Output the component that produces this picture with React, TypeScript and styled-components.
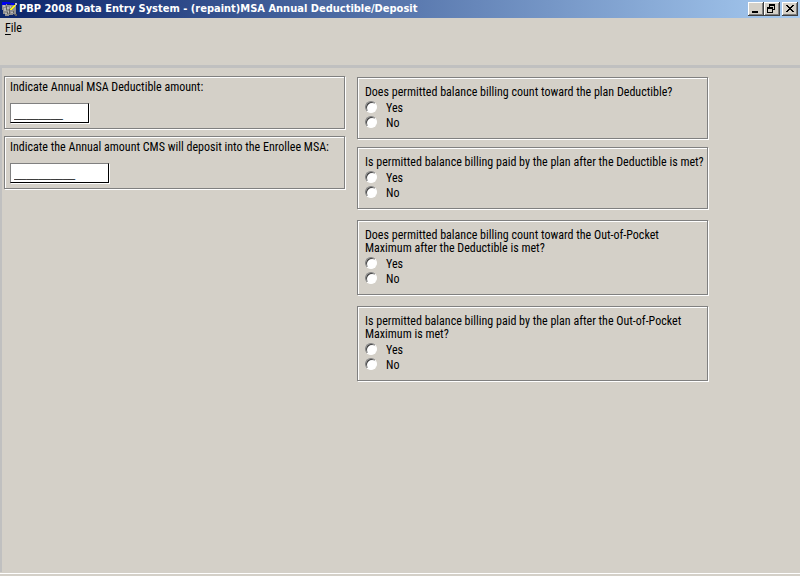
import React, { useId } from "react";
import styled, { createGlobalStyle } from "styled-components";

const face = "#d4d0c8";
const shade = "#808080";

const GlobalStyle = createGlobalStyle`
  *, *::before, *::after { box-sizing: border-box; }
  body {
    margin: 0;
    background: ${face};
    color: #000;
    font: 12px/13px "Roboto Condensed", "Liberation Sans", Arial, sans-serif;
  }
  button, input { font: inherit; color: inherit; }
`;

const Window = styled.div`
  display: flex;
  flex-direction: column;
  min-height: 100vh;
  background: ${face};
`;

const TitleBar = styled.header`
  display: flex;
  align-items: center;
  gap: 2px;
  height: 18px;
  padding: 0 2px;
  background: linear-gradient(to right, #0a246a, #a6caf0);
`;

const Title = styled.h1`
  flex: 1;
  min-width: 0;
  margin: 0;
  overflow: hidden;
  color: #fff;
  font: bold 11px/18px "DejaVu Sans Condensed", "DejaVu Sans", sans-serif;
  white-space: nowrap;
`;

const WindowButtons = styled.div`
  display: flex;
`;

const WindowButton = styled.button<{ $apart?: boolean }>`
  display: flex;
  width: 16px;
  height: 14px;
  margin-left: ${({ $apart }) => ($apart ? "2px" : "0")};
  padding: 0;
  border: 0;
  background: ${face};
  box-shadow: inset -1px -1px #404040, inset 1px 1px #fff, inset -2px -2px ${shade};
`;

const MenuBar = styled.nav`
  height: 47px;
  padding: 4px 5px;
`;

const MenuItem = styled.button`
  padding: 0;
  border: 0;
  background: none;
  line-height: 13px;

  u { text-underline-offset: 2px; }
`;

const Workspace = styled.main`
  flex: 1;
  display: grid;
  grid-template-columns: minmax(0, 341fr) minmax(0, 351fr);
  align-items: start;
  gap: 12px;
  padding: 8px 92px 8px 2px;
  border: 0 solid #c0c0c0;
  border-width: 3px 0 0 2px;
`;

const StatusEdge = styled.footer`
  height: 3px;
  margin-top: 1px;
  border-top: 1px solid #fff;
`;

const Stack = styled.div<{ $gap: number }>`
  display: flex;
  flex-direction: column;
  gap: ${({ $gap }) => $gap}px;
`;

const QuestionColumn = styled(Stack)`
  padding-top: 1px;
`;

const Panel = styled.section`
  border: 1px solid ${shade};
  box-shadow: inset 1px 1px #fff, 1px 1px #fff;
`;

const AmountPanel = styled(Panel)`
  display: flex;
  flex-direction: column;
  align-items: flex-start;
  gap: 9px;
  padding: 4px 5px 5px;
`;

const QuestionPanel = styled(Panel)`
  padding: 8px 0 8px 7px;
`;

const AmountInput = styled.input<{ $size: number }>`
  width: ${({ $size }) => $size}px;
  height: 20px;
  padding: 2px 3px 0;
  border: 1px solid;
  border-color: ${shade} #000 #000 ${shade};
  border-radius: 0;
  outline: 0;
  background: #fff;
  box-shadow: 1px 1px #fff;
  font: 11px "Liberation Sans", Arial, sans-serif;
`;

const Question = styled.p`
  margin: 0 0 1px;
`;

const Option = styled.label`
  display: flex;
  align-items: flex-start;
  gap: 9px;
  height: 15px;
  line-height: 17px;
`;

const Radio = styled.input`
  appearance: none;
  width: 12px;
  height: 12px;
  margin: 1px 0 0;
  border: 1px solid;
  border-color: ${shade} #fff #fff ${shade};
  border-radius: 50%;
  background: #fff;
  box-shadow: inset 1px 1px #404040;

  &:checked { background: radial-gradient(#000 2px, #fff 3px); }
`;

function AppIcon() {
  return (
    <svg width="15" height="15" viewBox="0 0 15 15" shapeRendering="crispEdges" aria-hidden="true">
      <path d="M0 2h5v1h9v9h-3v1H7v1H3v-2H1V8H0z" fill="#909090" />
      <path d="M1 3h2v2H1zM2 6h2v3H2zM5 5h2v2H5zM3 11h2v1H3zM8 4h1v2H8zM9 10h2v1H9zM6 9h1v2H6z" fill="#b8b8b8" />
      <path d="M4 4h1v4H4zM7 7h1v5H7zM5 10h1v2H5zM11 9h1v2h-1zM12 12h3v2h-2v-1h-1z" fill="#606060" />
      <path d="M0 0h8v1h4v2H9V2H4v1H0z" fill="#0000f0" />
      <path d="M12 3h2v1h-1v1h-1v1h-1v1h-1v1H8V7h1V6h1V5h1V4h1z" fill="#ffff00" />
      <path d="M13 1h2v2h-1v1h-1z" fill="#c0c0c0" />
    </svg>
  );
}

function MinimizeIcon() {
  return (
    <svg width="16" height="14" viewBox="0 0 16 14" shapeRendering="crispEdges" aria-hidden="true">
      <path d="M4 9h6v2H4z" />
    </svg>
  );
}

function RestoreIcon() {
  return (
    <svg width="16" height="14" viewBox="0 0 16 14" shapeRendering="crispEdges" aria-hidden="true">
      <path d="M5 2h6v6H9V7h1V4H6v1H5z" />
      <path fillRule="evenodd" d="M3 5h6v6H3zM4 7v3h4V7z" />
    </svg>
  );
}

function CloseIcon() {
  return (
    <svg width="16" height="14" viewBox="0 0 16 14" shapeRendering="crispEdges" aria-hidden="true">
      <path d="M4 3h2v1h1v1h2V4h1V3h2v1h-1v1h-1v1H9v1h1v1h1v1h1v1h-2V9H9V8H7v1H6v1H4V9h1V8h1V7h1V6H6V5H5V4H4z" />
    </svg>
  );
}

function AmountField({ label, size, mask }: { label: string; size: number; mask: string }) {
  const id = useId();
  return (
    <AmountPanel>
      <label htmlFor={id}>{label}</label>
      <AmountInput id={id} type="text" $size={size} defaultValue={mask} />
    </AmountPanel>
  );
}

function YesNoQuestion({ children }: { children: React.ReactNode }) {
  const id = useId();
  return (
    <QuestionPanel role="radiogroup" aria-labelledby={id}>
      <Question id={id}>{children}</Question>
      {["Yes", "No"].map((answer) => (
        <Option key={answer}>
          <Radio type="radio" name={`${id}-answer`} value={answer} />
          {answer}
        </Option>
      ))}
    </QuestionPanel>
  );
}

export default function App() {
  return (
    <Window>
      <GlobalStyle />
      <TitleBar>
        <AppIcon />
        <Title>PBP 2008 Data Entry System - (repaint)MSA Annual Deductible/Deposit</Title>
        <WindowButtons>
          <WindowButton aria-label="Minimize"><MinimizeIcon /></WindowButton>
          <WindowButton aria-label="Restore"><RestoreIcon /></WindowButton>
          <WindowButton aria-label="Close" $apart><CloseIcon /></WindowButton>
        </WindowButtons>
      </TitleBar>
      <MenuBar>
        <MenuItem><u>F</u>ile</MenuItem>
      </MenuBar>
      <Workspace>
        <Stack $gap={7}>
          <AmountField label="Indicate Annual MSA Deductible amount:" size={79} mask="________" />
          <AmountField
            label="Indicate the Annual amount CMS will deposit into the Enrollee MSA:"
            size={99}
            mask="__________"
          />
        </Stack>
        <QuestionColumn $gap={11}>
          <Stack $gap={8}>
            <YesNoQuestion>Does permitted balance billing count toward the plan Deductible?</YesNoQuestion>
            <YesNoQuestion>Is permitted balance billing paid by the plan after the Deductible is met?</YesNoQuestion>
          </Stack>
          <Stack $gap={11}>
            <YesNoQuestion>
              Does permitted balance billing count toward the Out-of-Pocket
              <br />
              Maximum after the Deductible is met?
            </YesNoQuestion>
            <YesNoQuestion>
              Is permitted balance billing paid by the plan after the Out-of-Pocket
              <br />
              Maximum is met?
            </YesNoQuestion>
          </Stack>
        </QuestionColumn>
      </Workspace>
      <StatusEdge />
    </Window>
  );
}
